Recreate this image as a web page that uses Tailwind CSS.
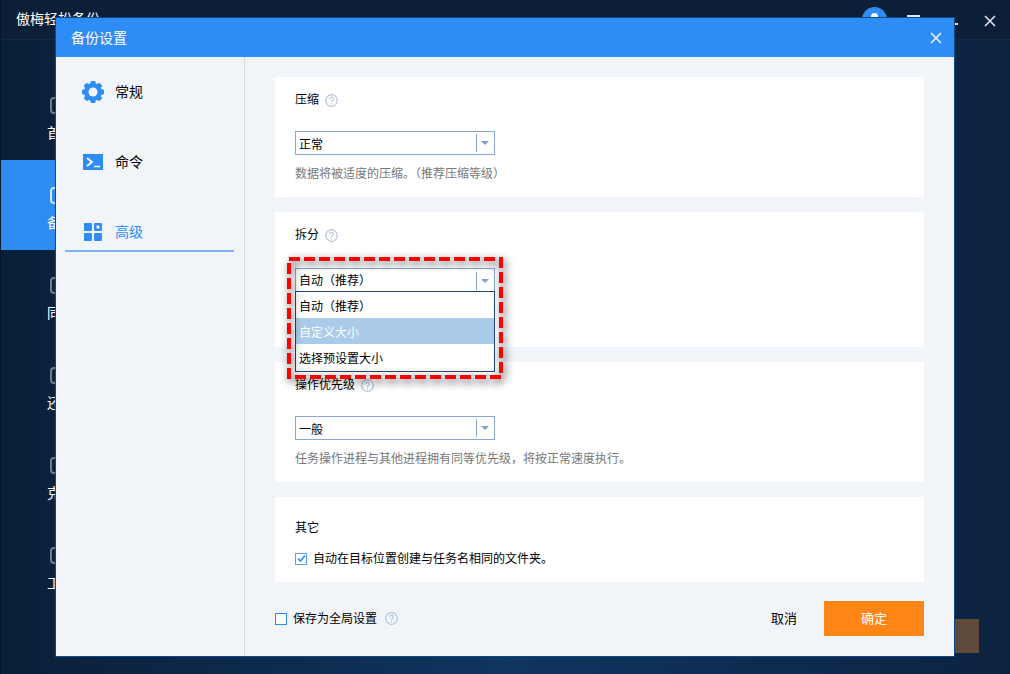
<!DOCTYPE html>
<html lang="zh-CN">
<head>
<meta charset="UTF-8" />
<title>备份设置</title>
<script src="https://cdn.jsdelivr.net/npm/@tailwindcss/browser@4"></script>
</head>
<body class="w-[1010px] h-[674px] overflow-hidden font-['Liberation_Sans','Noto_Sans_CJK_SC',sans-serif] text-xs text-black">
<div class="relative w-[1010px] h-[674px] overflow-hidden bg-gradient-to-r from-[#0a1f38] via-[#103560] to-[#0c2340] border-l border-[#061526]">

  <!-- app behind the dialog -->
  <header class="flex items-center h-10 pl-[15px] bg-[#0b1f38] border-b border-[#12294a] text-white text-sm">
    <span class="mb-[1px]">傲梅轻松备份</span>
    <div class="ml-auto flex items-start h-full">
      <span class="flex justify-center mt-[7px] mr-[20px] pt-[6px] w-[25px] h-[25px] rounded-full bg-[#2e8cf5]">
        <span class="w-[7px] h-[7px] rounded-full bg-white"></span>
      </span>
      <span class="mt-[15px] mr-[34px] w-[13px] h-[2px] bg-[#dfe8f2]"></span>
      <span class="mt-[23px] mr-[26px] w-[4px] h-[2px] bg-[#dfe8f2]"></span>
      <svg class="mt-[15px] mr-[14px]" width="12" height="12" viewBox="0 0 12 12"><path d="M1 1l10 10M11 1L1 11" stroke="#dfe8f2" stroke-width="1.6"/></svg>
    </div>
  </header>
  <nav class="w-[122px] pt-[30px] text-white text-sm">
    <div class="h-[90px] pl-[49px] pt-[27px]"><span class="block w-5 h-[17px] rounded-sm border-2 border-[#6f7f93]"></span><span class="block mt-[9px] -ml-[3px]">首页</span></div>
    <div class="h-[90px] pl-[49px] pt-[27px] bg-[#2e8cf5]"><span class="block w-5 h-[17px] rounded-sm border-2 border-[#cfe3fb]"></span><span class="block mt-[9px] -ml-[3px]">备份</span></div>
    <div class="h-[90px] pl-[49px] pt-[27px]"><span class="block w-5 h-[17px] rounded-sm border-2 border-[#6f7f93]"></span><span class="block mt-[9px] -ml-[3px]">同步</span></div>
    <div class="h-[90px] pl-[49px] pt-[27px]"><span class="block w-5 h-[17px] rounded-sm border-2 border-[#6f7f93]"></span><span class="block mt-[9px] -ml-[3px]">还原</span></div>
    <div class="h-[90px] pl-[49px] pt-[27px]"><span class="block w-5 h-[17px] rounded-sm border-2 border-[#6f7f93]"></span><span class="block mt-[9px] -ml-[3px]">克隆</span></div>
    <div class="h-[90px] pl-[49px] pt-[27px]"><span class="block w-5 h-[17px] rounded-sm border-2 border-[#6f7f93]"></span><span class="block mt-[9px] -ml-[3px]">工具</span></div>
  </nav>
  <div class="absolute left-[954px] top-[619px] w-[24px] h-[34px] bg-[#604a3a]"></div>

  <!-- dialog -->
  <div class="absolute left-[54px] top-[17px] w-[900px] h-[640px] flex flex-col bg-[#f1f5fa] border border-[#0d4a8a]">
    <div class="flex items-center justify-between h-[39px] shrink-0 pl-[15px] pr-[12px] bg-[#2e8cf5] text-white text-sm">
      <span>备份设置</span>
      <svg width="12" height="12" viewBox="0 0 12 12"><path d="M1 1l10 10M11 1L1 11" stroke="#e6f1fe" stroke-width="1.6"/></svg>
    </div>
    <div class="flex flex-1 min-h-0">
      <!-- left tabs -->
      <aside class="w-[189px] shrink-0 pt-[15px] border-r border-[#d5dde3] text-sm">
        <div class="flex items-center h-10 ml-[26px]">
          <svg class="w-[22px] h-[22px] mr-[11px]" viewBox="0 0 22 22">
            <circle cx="11" cy="11" r="6.5" fill="none" stroke="#2e8cf5" stroke-width="5"/>
            <g fill="#2e8cf5">
              <rect x="8.5" y="0" width="5" height="22" rx="1"/>
              <rect x="8.5" y="0" width="5" height="22" rx="1" transform="rotate(45 11 11)"/>
              <rect x="8.5" y="0" width="5" height="22" rx="1" transform="rotate(90 11 11)"/>
              <rect x="8.5" y="0" width="5" height="22" rx="1" transform="rotate(135 11 11)"/>
            </g>
            <circle cx="11" cy="11" r="4.5" fill="#f1f5fa"/>
          </svg>
          <span>常规</span>
        </div>
        <div class="flex items-center h-10 mt-[30px] ml-[26px]">
          <svg class="w-[22px] h-[16px] mr-[11px]" viewBox="0 0 22 16">
            <rect x="1" width="20" height="16" fill="#2e8cf5"/>
            <path d="M5 4l5 4-5 4" fill="none" stroke="#fff" stroke-width="1.8"/>
            <path d="M12 12.5h6" stroke="#fff" stroke-width="1.6"/>
          </svg>
          <span>命令</span>
        </div>
        <div class="flex items-center h-10 mt-[30px] ml-[9px] pt-[2px] w-[169px] border-b-2 border-[#7ab4f5] text-[#2e8cf5]">
          <svg class="w-[18px] h-[18px] ml-[19px] mr-[13px]" viewBox="0 0 18 18">
            <rect width="8" height="8" rx="1" fill="#2e8cf5"/>
            <rect x="10" width="8" height="8" rx="1" fill="#2e8cf5"/>
            <rect x="12.5" y="2.5" width="3" height="3" fill="#f1f5fa"/>
            <rect y="10" width="8" height="8" rx="1" fill="#2e8cf5"/>
            <rect x="10" y="10" width="8" height="8" rx="1" fill="#2e8cf5"/>
          </svg>
          <span>高级</span>
        </div>
      </aside>

      <!-- settings -->
      <main class="flex flex-col flex-1 min-w-0 pt-5 px-[30px]">
        <section class="h-[120px] shrink-0 mb-[15px] px-5 pt-[14px] bg-white">
          <div class="flex items-center h-[18px]">压缩
            <svg class="ml-[6px]" width="13" height="13" viewBox="0 0 13 13"><circle cx="6.5" cy="6.5" r="5.8" fill="none" stroke="#b3c5d9" stroke-width="1.2"/><path d="M4.7 5a1.8 1.8 0 1 1 2.6 1.6c-.6.3-.8.7-.8 1.3M6.5 9.2v1.2" fill="none" stroke="#b3c5d9" stroke-width="1.1"/></svg>
          </div>
          <div class="flex items-center w-[200px] h-6 mt-[22px] pl-[3px] border border-[#8aa7d4] bg-white">
            <span class="mt-[3px]">正常</span>
            <span class="ml-auto w-[1px] h-[18px] bg-[#8aa7d4]"></span>
            <span class="ml-[4px] mr-[5px] w-0 h-0 border-x-[4px] border-x-transparent border-t-[4px] border-t-[#7f9fcf]"></span>
          </div>
          <p class="mt-[11px] text-[#777]">数据将被适度的压缩。（推荐压缩等级）</p>
        </section>

        <section class="relative h-[135px] shrink-0 mb-[15px] px-5 pt-[14px] bg-white">
          <div class="flex items-center h-[18px]">拆分
            <svg class="ml-[6px]" width="13" height="13" viewBox="0 0 13 13"><circle cx="6.5" cy="6.5" r="5.8" fill="none" stroke="#b3c5d9" stroke-width="1.2"/><path d="M4.7 5a1.8 1.8 0 1 1 2.6 1.6c-.6.3-.8.7-.8 1.3M6.5 9.2v1.2" fill="none" stroke="#b3c5d9" stroke-width="1.1"/></svg>
          </div>
          <div class="flex items-center w-[200px] h-[25px] mt-[24px] pl-[3px] border border-[#8aa7d4] bg-white">
            <span>自动（推荐）</span>
            <span class="ml-auto w-[1px] h-[18px] bg-[#8aa7d4]"></span>
            <span class="ml-[4px] mr-[5px] w-0 h-0 border-x-[4px] border-x-transparent border-t-[4px] border-t-[#7f9fcf]"></span>
          </div>
          <!-- open dropdown list -->
          <ul class="absolute z-20 left-5 top-[79px] w-[200px] h-[81px] bg-white border border-[#1f4a80]">
            <li class="flex items-center h-[26px] pl-[3px] pt-[3px]">自动（推荐）</li>
            <li class="flex items-center h-[26px] pl-[3px] pt-[3px] bg-[#aacbe9] text-white">自定义大小</li>
            <li class="flex items-center h-[26px] pl-[3px] pt-[3px]">选择预设置大小</li>
          </ul>
          <!-- red highlight -->
          <svg class="absolute z-30 left-[12px] top-[45px] overflow-visible drop-shadow-[2px_3px_4px_rgba(0,0,0,0.75)]" width="216" height="122" viewBox="0 0 216 122">
            <rect x="2" y="2" width="212" height="118" fill="none" stroke="#ff0000" stroke-width="4" stroke-dasharray="11 4"/>
          </svg>
        </section>

        <section class="h-[120px] shrink-0 mb-[15px] px-5 pt-[14px] bg-white">
          <div class="flex items-center h-[18px]">操作优先级
            <svg class="ml-[6px]" width="13" height="13" viewBox="0 0 13 13"><circle cx="6.5" cy="6.5" r="5.8" fill="none" stroke="#b3c5d9" stroke-width="1.2"/><path d="M4.7 5a1.8 1.8 0 1 1 2.6 1.6c-.6.3-.8.7-.8 1.3M6.5 9.2v1.2" fill="none" stroke="#b3c5d9" stroke-width="1.1"/></svg>
          </div>
          <div class="flex items-center w-[200px] h-6 mt-[22px] pl-[3px] border border-[#8aa7d4] bg-white">
            <span class="mt-[3px]">一般</span>
            <span class="ml-auto w-[1px] h-[18px] bg-[#8aa7d4]"></span>
            <span class="ml-[4px] mr-[5px] w-0 h-0 border-x-[4px] border-x-transparent border-t-[4px] border-t-[#7f9fcf]"></span>
          </div>
          <p class="mt-[11px] text-[#777]">任务操作进程与其他进程拥有同等优先级，将按正常速度执行。</p>
        </section>

        <section class="h-[85px] shrink-0 px-5 pt-[22px] bg-white">
          <div class="h-[18px] leading-[18px]">其它</div>
          <div class="flex items-center h-[18px] mt-[13px]">
            <svg class="mr-[6px]" width="12" height="12" viewBox="0 0 12 12"><rect x=".5" y=".5" width="11" height="11" fill="none" stroke="#5aa2f2"/><path d="M3 5.5l2.5 2.5L10 2.5" fill="none" stroke="#2e8cf5" stroke-width="1.6"/></svg>
            <span>自动在目标位置创建与任务名相同的文件夹。</span>
          </div>
        </section>

        <footer class="flex items-center mt-[19px]">
          <span class="w-3 h-3 mr-[6px] border border-[#2e8cf5] bg-white"></span>
          <span>保存为全局设置</span>
          <svg class="ml-[8px]" width="13" height="13" viewBox="0 0 13 13"><circle cx="6.5" cy="6.5" r="5.8" fill="none" stroke="#b3c5d9" stroke-width="1.2"/><path d="M4.7 5a1.8 1.8 0 1 1 2.6 1.6c-.6.3-.8.7-.8 1.3M6.5 9.2v1.2" fill="none" stroke="#b3c5d9" stroke-width="1.1"/></svg>
          <span class="ml-auto mr-[27px] text-[13px]">取消</span>
          <button class="w-[100px] h-[35px] bg-[#ff8614] text-white text-[13px]">确定</button>
        </footer>
      </main>
    </div>
  </div>
</div>
</body>
</html>
